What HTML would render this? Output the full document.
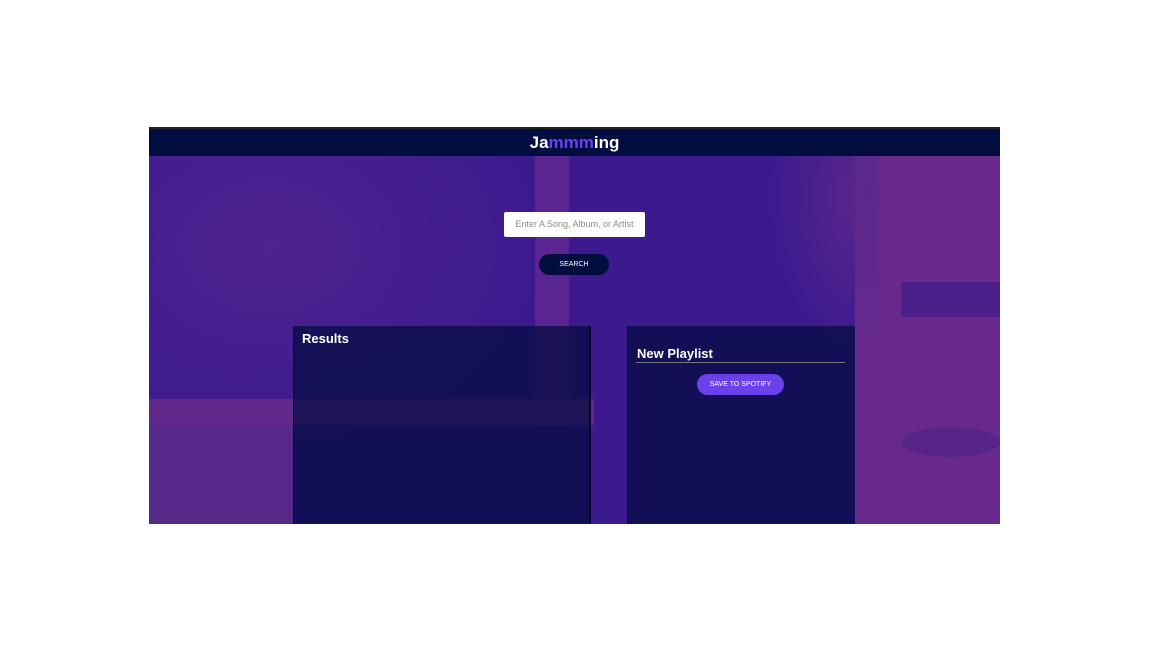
<!DOCTYPE html><html><head><style>
body{margin:0;width:1152px;height:648px;background:#fff;position:relative;overflow:hidden;font-family:"Liberation Sans",sans-serif}
.a{position:absolute}
</style></head><body>
<div class="a" style="left:149px;top:127px;width:851px;height:397px;background:#3c1a8e;overflow:hidden">
 <div class="a" style="left:0;top:29px;width:400px;height:300px;background:radial-gradient(ellipse at 30% 30%,#4e228f 0%,#3c1a8e 70%)"></div>
 <div class="a" style="left:386px;top:29px;width:34px;height:270px;background:#5a2590"></div>
 <div class="a" style="left:0;top:272px;width:445px;height:26px;background:#62288c"></div>
 <div class="a" style="left:0;top:298px;width:145px;height:99px;background:#562888"></div>
 <div class="a" style="left:706px;top:29px;width:145px;height:368px;background:#672a8c"></div>
 <div class="a" style="left:620px;top:29px;width:110px;height:200px;background:radial-gradient(ellipse at 90% 20%,#5c278c 0%,transparent 70%)"></div>
 <div class="a" style="left:752px;top:155px;width:99px;height:35px;background:#4a1f88"></div>
 <div class="a" style="left:752px;top:300px;width:99px;height:30px;background:#4e2189;border-radius:50%;opacity:.6"></div>
</div>
<div class="a" style="left:149px;top:127px;width:851px;height:29px;background:#010c3f;border-top:2px solid #222;box-sizing:border-box;text-align:center;font:bold 17px/27px 'Liberation Sans',sans-serif;color:#fff">Ja<span style="color:#6c41ec">mmm</span>ing</div>
<div class="a" style="left:504px;top:212px;width:141px;height:25px;background:#fff;border-radius:2px;font-size:9px;line-height:25px;text-align:center;color:#888">Enter A Song, Album, or Artist</div>
<div class="a" style="left:539px;top:254px;width:70px;height:21px;background:#010c3f;border-radius:11px;color:#fff;font-size:7px;line-height:21px;text-align:center">SEARCH</div>
<div class="a" style="left:293px;top:326px;width:298px;height:198px;background:rgba(1,12,63,0.7);border-left:1px solid #0a0630;border-right:2px solid #0a0630;box-sizing:border-box"></div>
<div class="a" style="left:302px;top:331px;color:#fff;font-weight:bold;font-size:13px">Results</div>
<div class="a" style="left:627px;top:326px;width:228px;height:198px;background:rgba(1,12,63,0.7);border-left:1px solid #0a0630;box-sizing:border-box"></div>
<div class="a" style="left:637px;top:346px;color:#fff;font-weight:bold;font-size:13px">New Playlist</div>
<div class="a" style="left:636px;top:362px;width:209px;height:1px;background:#777"></div>
<div class="a" style="left:697px;top:374px;width:87px;height:21px;background:#6c41ec;border-radius:11px;color:#fff;font-size:7px;line-height:21px;text-align:center">SAVE TO SPOTIFY</div>
</body></html>
